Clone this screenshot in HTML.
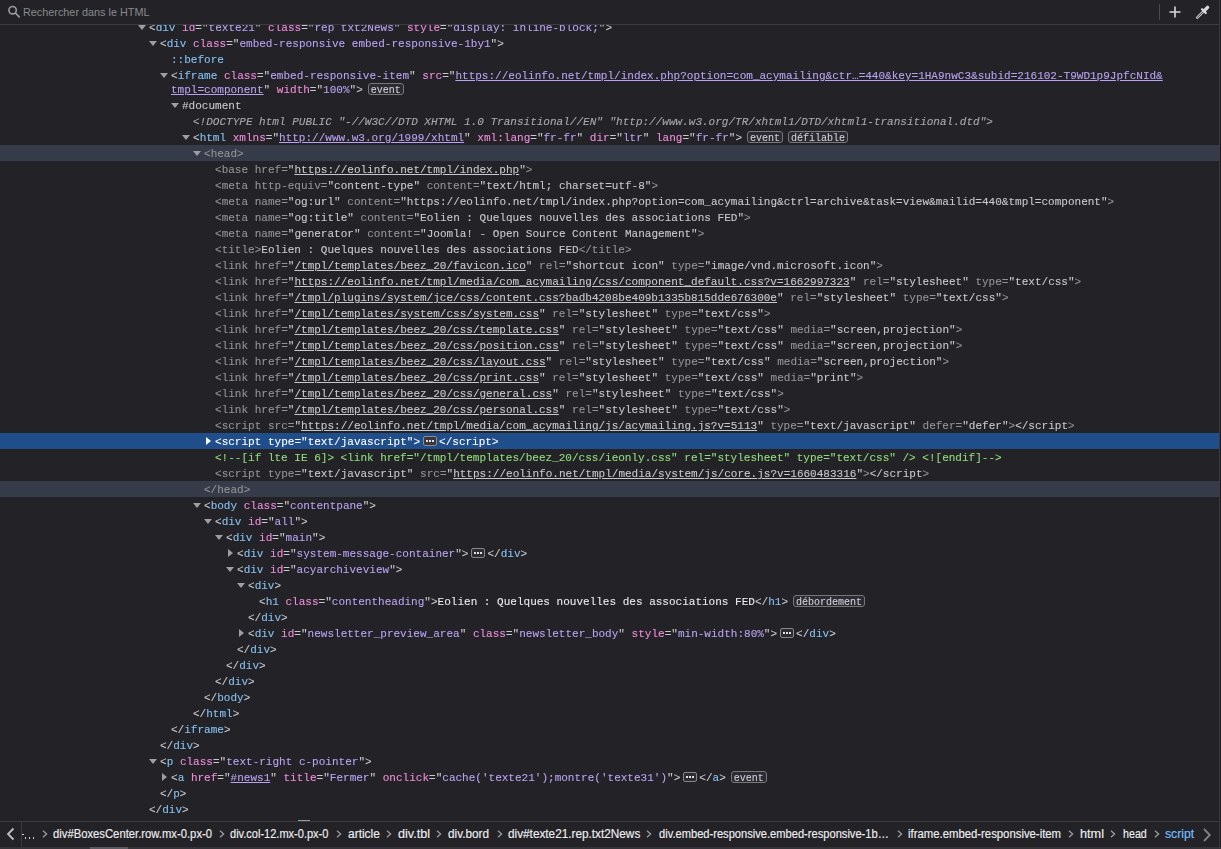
<!DOCTYPE html>
<html><head><meta charset="utf-8"><title>Inspector</title>
<style>
html,body{margin:0;padding:0;}
body{width:1221px;height:849px;overflow:hidden;background:#232327;position:relative;font-family:"Liberation Mono",monospace;}
#tree{position:absolute;left:0;top:0;width:1221px;height:849px;overflow:hidden;will-change:transform;}
.row{position:absolute;height:16px;line-height:18px;font-size:11.036px;white-space:pre;color:#c8c8cc;-webkit-text-stroke:0.1px currentColor;}
.bg{position:absolute;left:0;width:1219px;height:16px;}
.bsel{background:#204e8a;}
.bhov{background:#353b48;}
.p{color:#c8c8cc;}
.t{color:#86c0f2;}
.n{color:#f08cdc;}
.v{color:#b9a2f2;}
.u{text-decoration:underline;}
.tx{color:#e8e8ec;}
.ps{color:#86c0f2;}
.ps{}
.doc{color:#c8c8cc;}
.dt{color:#a8a8ae;font-style:italic;}
.cm{color:#8edc7c;}
.dim .p,.dim .t,.dim .n{color:#939397;}
.dim .v,.dim .tx{color:#c8c8cc;}
.dim .p.q{color:#c8c8cc;}
.sel .exp{background:#38383d;border-color:#8a8a90}
.sel .p,.sel .t,.sel .n,.sel .v,.sel .tx{color:#ffffff;}
.tw{position:absolute;width:0;height:0;}
.td{border-left:4px solid transparent;border-right:4px solid transparent;border-top:5px solid #9d9da3;}
.tr{border-top:4px solid transparent;border-bottom:4px solid transparent;border-left:5px solid #9d9da3;}
.trs{border-left-color:#ffffff;}
.bdg{display:inline-block;vertical-align:top;margin-top:2px;margin-left:5px;font-size:10px;line-height:13px;height:10px;padding:0 2px;border:1px solid #76767c;border-radius:3px;background:#2b2b33;color:#cdcdd2;}
.exp{display:inline-block;position:relative;vertical-align:top;margin:3px 2px 0 3px;width:12px;height:8px;border:1px solid #85858b;border-radius:2px;background:#2c2c31;}
.exp i{position:absolute;top:3px;width:2px;height:2px;background:#e0e0e6;}
.exp i:nth-child(1){left:2px}.exp i:nth-child(2){left:5px}.exp i:nth-child(3){left:8px}

</style></head><body>
<div id="tree">
<div class="tw td" style="left:138px;top:25px"></div><div class="row" style="top:19px;left:149px"><span class="p">&lt;</span><span class="t">div</span> <span class="n">id</span><span class="p">=</span><span class="p q">"</span><span class="v">texte21</span><span class="p q">"</span> <span class="n">class</span><span class="p">=</span><span class="p q">"</span><span class="v">rep txt2News</span><span class="p q">"</span> <span class="n">style</span><span class="p">=</span><span class="p q">"</span><span class="v">display: inline-block;</span><span class="p q">"</span><span class="p">&gt;</span></div><div class="tw td" style="left:149px;top:41px"></div><div class="row" style="top:35px;left:160px"><span class="p">&lt;</span><span class="t">div</span> <span class="n">class</span><span class="p">=</span><span class="p q">"</span><span class="v">embed-responsive embed-responsive-1by1</span><span class="p q">"</span><span class="p">&gt;</span></div><div class="row" style="top:51px;left:171px"><span class="ps">::before</span></div><div class="tw td" style="left:160px;top:73px"></div><div class="row" style="top:67px;left:171px"><span class="p">&lt;</span><span class="t">iframe</span> <span class="n">class</span><span class="p">=</span><span class="p q">"</span><span class="v">embed-responsive-item</span><span class="p q">"</span> <span class="n">src</span><span class="p">=</span><span class="p q">"</span><span class="v u">https://eolinfo.net/tmpl/index.php?option=com_acymailing&amp;ctr…=440&amp;key=1HA9nwC3&amp;subid=216102-T9WD1p9JpfcNId&amp;</span></div><div class="row" style="top:81px;left:171px"><span class="v u">tmpl=component</span><span class="p q">"</span> <span class="n">width</span><span class="p">=</span><span class="p q">"</span><span class="v">100%</span><span class="p q">"</span><span class="p">&gt;</span><span class="bdg">event</span></div><div class="tw td" style="left:171px;top:103px"></div><div class="row" style="top:97px;left:182px"><span class="doc">#document</span></div><div class="row" style="top:113px;left:193px"><span class="dt">&lt;!DOCTYPE html PUBLIC "-//W3C//DTD XHTML 1.0 Transitional//EN" "http://www.w3.org/TR/xhtml1/DTD/xhtml1-transitional.dtd"&gt;</span></div><div class="tw td" style="left:182px;top:135px"></div><div class="row" style="top:129px;left:193px"><span class="p">&lt;</span><span class="t">html</span> <span class="n">xmlns</span><span class="p">=</span><span class="p q">"</span><span class="v u">http://www.w3.org/1999/xhtml</span><span class="p q">"</span> <span class="n">xml:lang</span><span class="p">=</span><span class="p q">"</span><span class="v">fr-fr</span><span class="p q">"</span> <span class="n">dir</span><span class="p">=</span><span class="p q">"</span><span class="v">ltr</span><span class="p q">"</span> <span class="n">lang</span><span class="p">=</span><span class="p q">"</span><span class="v">fr-fr</span><span class="p q">"</span><span class="p">&gt;</span><span class="bdg">event</span><span class="bdg">défilable</span></div><div class="bg bhov" style="top:145px"></div><div class="tw td" style="left:193px;top:151px"></div><div class="row dim hov" style="top:145px;left:204px"><span class="p">&lt;</span><span class="t">head</span><span class="p">&gt;</span></div><div class="row dim" style="top:161px;left:215px"><span class="p">&lt;</span><span class="t">base</span> <span class="n">href</span><span class="p">=</span><span class="p q">"</span><span class="v u">https://eolinfo.net/tmpl/index.php</span><span class="p q">"</span><span class="p">&gt;</span></div><div class="row dim" style="top:177px;left:215px"><span class="p">&lt;</span><span class="t">meta</span> <span class="n">http-equiv</span><span class="p">=</span><span class="p q">"</span><span class="v">content-type</span><span class="p q">"</span> <span class="n">content</span><span class="p">=</span><span class="p q">"</span><span class="v">text/html; charset=utf-8</span><span class="p q">"</span><span class="p">&gt;</span></div><div class="row dim" style="top:193px;left:215px"><span class="p">&lt;</span><span class="t">meta</span> <span class="n">name</span><span class="p">=</span><span class="p q">"</span><span class="v">og:url</span><span class="p q">"</span> <span class="n">content</span><span class="p">=</span><span class="p q">"</span><span class="v">https://eolinfo.net/tmpl/index.php?option=com_acymailing&amp;ctrl=archive&amp;task=view&amp;mailid=440&amp;tmpl=component</span><span class="p q">"</span><span class="p">&gt;</span></div><div class="row dim" style="top:209px;left:215px"><span class="p">&lt;</span><span class="t">meta</span> <span class="n">name</span><span class="p">=</span><span class="p q">"</span><span class="v">og:title</span><span class="p q">"</span> <span class="n">content</span><span class="p">=</span><span class="p q">"</span><span class="v">Eolien : Quelques nouvelles des associations FED</span><span class="p q">"</span><span class="p">&gt;</span></div><div class="row dim" style="top:225px;left:215px"><span class="p">&lt;</span><span class="t">meta</span> <span class="n">name</span><span class="p">=</span><span class="p q">"</span><span class="v">generator</span><span class="p q">"</span> <span class="n">content</span><span class="p">=</span><span class="p q">"</span><span class="v">Joomla! - Open Source Content Management</span><span class="p q">"</span><span class="p">&gt;</span></div><div class="row dim" style="top:241px;left:215px"><span class="p">&lt;</span><span class="t">title</span><span class="p">&gt;</span><span class="tx">Eolien : Quelques nouvelles des associations FED</span><span class="p">&lt;/</span><span class="t">title</span><span class="p">&gt;</span></div><div class="row dim" style="top:257px;left:215px"><span class="p">&lt;</span><span class="t">link</span> <span class="n">href</span><span class="p">=</span><span class="p q">"</span><span class="v u">/tmpl/templates/beez_20/favicon.ico</span><span class="p q">"</span> <span class="n">rel</span><span class="p">=</span><span class="p q">"</span><span class="v">shortcut icon</span><span class="p q">"</span> <span class="n">type</span><span class="p">=</span><span class="p q">"</span><span class="v">image/vnd.microsoft.icon</span><span class="p q">"</span><span class="p">&gt;</span></div><div class="row dim" style="top:273px;left:215px"><span class="p">&lt;</span><span class="t">link</span> <span class="n">href</span><span class="p">=</span><span class="p q">"</span><span class="v u">https://eolinfo.net/tmpl/media/com_acymailing/css/component_default.css?v=1662997323</span><span class="p q">"</span> <span class="n">rel</span><span class="p">=</span><span class="p q">"</span><span class="v">stylesheet</span><span class="p q">"</span> <span class="n">type</span><span class="p">=</span><span class="p q">"</span><span class="v">text/css</span><span class="p q">"</span><span class="p">&gt;</span></div><div class="row dim" style="top:289px;left:215px"><span class="p">&lt;</span><span class="t">link</span> <span class="n">href</span><span class="p">=</span><span class="p q">"</span><span class="v u">/tmpl/plugins/system/jce/css/content.css?badb4208be409b1335b815dde676300e</span><span class="p q">"</span> <span class="n">rel</span><span class="p">=</span><span class="p q">"</span><span class="v">stylesheet</span><span class="p q">"</span> <span class="n">type</span><span class="p">=</span><span class="p q">"</span><span class="v">text/css</span><span class="p q">"</span><span class="p">&gt;</span></div><div class="row dim" style="top:305px;left:215px"><span class="p">&lt;</span><span class="t">link</span> <span class="n">href</span><span class="p">=</span><span class="p q">"</span><span class="v u">/tmpl/templates/system/css/system.css</span><span class="p q">"</span> <span class="n">rel</span><span class="p">=</span><span class="p q">"</span><span class="v">stylesheet</span><span class="p q">"</span> <span class="n">type</span><span class="p">=</span><span class="p q">"</span><span class="v">text/css</span><span class="p q">"</span><span class="p">&gt;</span></div><div class="row dim" style="top:321px;left:215px"><span class="p">&lt;</span><span class="t">link</span> <span class="n">href</span><span class="p">=</span><span class="p q">"</span><span class="v u">/tmpl/templates/beez_20/css/template.css</span><span class="p q">"</span> <span class="n">rel</span><span class="p">=</span><span class="p q">"</span><span class="v">stylesheet</span><span class="p q">"</span> <span class="n">type</span><span class="p">=</span><span class="p q">"</span><span class="v">text/css</span><span class="p q">"</span> <span class="n">media</span><span class="p">=</span><span class="p q">"</span><span class="v">screen,projection</span><span class="p q">"</span><span class="p">&gt;</span></div><div class="row dim" style="top:337px;left:215px"><span class="p">&lt;</span><span class="t">link</span> <span class="n">href</span><span class="p">=</span><span class="p q">"</span><span class="v u">/tmpl/templates/beez_20/css/position.css</span><span class="p q">"</span> <span class="n">rel</span><span class="p">=</span><span class="p q">"</span><span class="v">stylesheet</span><span class="p q">"</span> <span class="n">type</span><span class="p">=</span><span class="p q">"</span><span class="v">text/css</span><span class="p q">"</span> <span class="n">media</span><span class="p">=</span><span class="p q">"</span><span class="v">screen,projection</span><span class="p q">"</span><span class="p">&gt;</span></div><div class="row dim" style="top:353px;left:215px"><span class="p">&lt;</span><span class="t">link</span> <span class="n">href</span><span class="p">=</span><span class="p q">"</span><span class="v u">/tmpl/templates/beez_20/css/layout.css</span><span class="p q">"</span> <span class="n">rel</span><span class="p">=</span><span class="p q">"</span><span class="v">stylesheet</span><span class="p q">"</span> <span class="n">type</span><span class="p">=</span><span class="p q">"</span><span class="v">text/css</span><span class="p q">"</span> <span class="n">media</span><span class="p">=</span><span class="p q">"</span><span class="v">screen,projection</span><span class="p q">"</span><span class="p">&gt;</span></div><div class="row dim" style="top:369px;left:215px"><span class="p">&lt;</span><span class="t">link</span> <span class="n">href</span><span class="p">=</span><span class="p q">"</span><span class="v u">/tmpl/templates/beez_20/css/print.css</span><span class="p q">"</span> <span class="n">rel</span><span class="p">=</span><span class="p q">"</span><span class="v">stylesheet</span><span class="p q">"</span> <span class="n">type</span><span class="p">=</span><span class="p q">"</span><span class="v">text/css</span><span class="p q">"</span> <span class="n">media</span><span class="p">=</span><span class="p q">"</span><span class="v">print</span><span class="p q">"</span><span class="p">&gt;</span></div><div class="row dim" style="top:385px;left:215px"><span class="p">&lt;</span><span class="t">link</span> <span class="n">href</span><span class="p">=</span><span class="p q">"</span><span class="v u">/tmpl/templates/beez_20/css/general.css</span><span class="p q">"</span> <span class="n">rel</span><span class="p">=</span><span class="p q">"</span><span class="v">stylesheet</span><span class="p q">"</span> <span class="n">type</span><span class="p">=</span><span class="p q">"</span><span class="v">text/css</span><span class="p q">"</span><span class="p">&gt;</span></div><div class="row dim" style="top:401px;left:215px"><span class="p">&lt;</span><span class="t">link</span> <span class="n">href</span><span class="p">=</span><span class="p q">"</span><span class="v u">/tmpl/templates/beez_20/css/personal.css</span><span class="p q">"</span> <span class="n">rel</span><span class="p">=</span><span class="p q">"</span><span class="v">stylesheet</span><span class="p q">"</span> <span class="n">type</span><span class="p">=</span><span class="p q">"</span><span class="v">text/css</span><span class="p q">"</span><span class="p">&gt;</span></div><div class="row dim" style="top:417px;left:215px"><span class="p">&lt;</span><span class="t">script</span> <span class="n">src</span><span class="p">=</span><span class="p q">"</span><span class="v u">https://eolinfo.net/tmpl/media/com_acymailing/js/acymailing.js?v=5113</span><span class="p q">"</span> <span class="n">type</span><span class="p">=</span><span class="p q">"</span><span class="v">text/javascript</span><span class="p q">"</span> <span class="n">defer</span><span class="p">=</span><span class="p q">"</span><span class="v">defer</span><span class="p q">"</span><span class="p">&gt;</span>&lt;/script<span class="p">&gt;</span></div><div class="bg bsel" style="top:433px"></div><div class="tw tr trs" style="left:206px;top:437px"></div><div class="row sel" style="top:433px;left:215px"><span class="p">&lt;</span><span class="t">script</span> <span class="n">type</span><span class="p">=</span><span class="p q">"</span><span class="v">text/javascript</span><span class="p q">"</span><span class="p">&gt;</span><span class="exp"><i></i><i></i><i></i></span><span class="p">&lt;/</span><span class="t">script</span><span class="p">&gt;</span></div><div class="row" style="top:449px;left:215px"><span class="cm">&lt;!--[if lte IE 6]&gt; &lt;link href="/tmpl/templates/beez_20/css/ieonly.css" rel="stylesheet" type="text/css" /&gt; &lt;![endif]--&gt;</span></div><div class="row dim" style="top:465px;left:215px"><span class="p">&lt;</span><span class="t">script</span> <span class="n">type</span><span class="p">=</span><span class="p q">"</span><span class="v">text/javascript</span><span class="p q">"</span> <span class="n">src</span><span class="p">=</span><span class="p q">"</span><span class="v u">https://eolinfo.net/tmpl/media/system/js/core.js?v=1660483316</span><span class="p q">"</span><span class="p">&gt;</span>&lt;/script<span class="p">&gt;</span></div><div class="bg bhov" style="top:481px"></div><div class="row dim hov" style="top:481px;left:204px"><span class="p">&lt;/</span><span class="t">head</span><span class="p">&gt;</span></div><div class="tw td" style="left:193px;top:503px"></div><div class="row" style="top:497px;left:204px"><span class="p">&lt;</span><span class="t">body</span> <span class="n">class</span><span class="p">=</span><span class="p q">"</span><span class="v">contentpane</span><span class="p q">"</span><span class="p">&gt;</span></div><div class="tw td" style="left:204px;top:519px"></div><div class="row" style="top:513px;left:215px"><span class="p">&lt;</span><span class="t">div</span> <span class="n">id</span><span class="p">=</span><span class="p q">"</span><span class="v">all</span><span class="p q">"</span><span class="p">&gt;</span></div><div class="tw td" style="left:215px;top:535px"></div><div class="row" style="top:529px;left:226px"><span class="p">&lt;</span><span class="t">div</span> <span class="n">id</span><span class="p">=</span><span class="p q">"</span><span class="v">main</span><span class="p q">"</span><span class="p">&gt;</span></div><div class="tw tr" style="left:228px;top:549px"></div><div class="row" style="top:545px;left:237px"><span class="p">&lt;</span><span class="t">div</span> <span class="n">id</span><span class="p">=</span><span class="p q">"</span><span class="v">system-message-container</span><span class="p q">"</span><span class="p">&gt;</span><span class="exp"><i></i><i></i><i></i></span><span class="p">&lt;/</span><span class="t">div</span><span class="p">&gt;</span></div><div class="tw td" style="left:226px;top:567px"></div><div class="row" style="top:561px;left:237px"><span class="p">&lt;</span><span class="t">div</span> <span class="n">id</span><span class="p">=</span><span class="p q">"</span><span class="v">acyarchiveview</span><span class="p q">"</span><span class="p">&gt;</span></div><div class="tw td" style="left:237px;top:583px"></div><div class="row" style="top:577px;left:248px"><span class="p">&lt;</span><span class="t">div</span><span class="p">&gt;</span></div><div class="row" style="top:593px;left:259px"><span class="p">&lt;</span><span class="t">h1</span> <span class="n">class</span><span class="p">=</span><span class="p q">"</span><span class="v">contentheading</span><span class="p q">"</span><span class="p">&gt;</span><span class="tx">Eolien : Quelques nouvelles des associations FED</span><span class="p">&lt;/</span><span class="t">h1</span><span class="p">&gt;</span><span class="bdg">débordement</span></div><div class="row" style="top:609px;left:248px"><span class="p">&lt;/</span><span class="t">div</span><span class="p">&gt;</span></div><div class="tw tr" style="left:239px;top:629px"></div><div class="row" style="top:625px;left:248px"><span class="p">&lt;</span><span class="t">div</span> <span class="n">id</span><span class="p">=</span><span class="p q">"</span><span class="v">newsletter_preview_area</span><span class="p q">"</span> <span class="n">class</span><span class="p">=</span><span class="p q">"</span><span class="v">newsletter_body</span><span class="p q">"</span> <span class="n">style</span><span class="p">=</span><span class="p q">"</span><span class="v">min-width:80%</span><span class="p q">"</span><span class="p">&gt;</span><span class="exp"><i></i><i></i><i></i></span><span class="p">&lt;/</span><span class="t">div</span><span class="p">&gt;</span></div><div class="row" style="top:641px;left:237px"><span class="p">&lt;/</span><span class="t">div</span><span class="p">&gt;</span></div><div class="row" style="top:657px;left:226px"><span class="p">&lt;/</span><span class="t">div</span><span class="p">&gt;</span></div><div class="row" style="top:673px;left:215px"><span class="p">&lt;/</span><span class="t">div</span><span class="p">&gt;</span></div><div class="row" style="top:689px;left:204px"><span class="p">&lt;/</span><span class="t">body</span><span class="p">&gt;</span></div><div class="row" style="top:705px;left:193px"><span class="p">&lt;/</span><span class="t">html</span><span class="p">&gt;</span></div><div class="row" style="top:721px;left:171px"><span class="p">&lt;/</span><span class="t">iframe</span><span class="p">&gt;</span></div><div class="row" style="top:737px;left:160px"><span class="p">&lt;/</span><span class="t">div</span><span class="p">&gt;</span></div><div class="tw td" style="left:149px;top:759px"></div><div class="row" style="top:753px;left:160px"><span class="p">&lt;</span><span class="t">p</span> <span class="n">class</span><span class="p">=</span><span class="p q">"</span><span class="v">text-right c-pointer</span><span class="p q">"</span><span class="p">&gt;</span></div><div class="tw tr" style="left:162px;top:773px"></div><div class="row" style="top:769px;left:171px"><span class="p">&lt;</span><span class="t">a</span> <span class="n">href</span><span class="p">=</span><span class="p q">"</span><span class="v u">#news1</span><span class="p q">"</span> <span class="n">title</span><span class="p">=</span><span class="p q">"</span><span class="v">Fermer</span><span class="p q">"</span> <span class="n">onclick</span><span class="p">=</span><span class="p q">"</span><span class="v">cache('texte21');montre('texte31')</span><span class="p q">"</span><span class="p">&gt;</span><span class="exp"><i></i><i></i><i></i></span><span class="p">&lt;/</span><span class="t">a</span><span class="p">&gt;</span><span class="bdg">event</span></div><div class="row" style="top:785px;left:160px"><span class="p">&lt;/</span><span class="t">p</span><span class="p">&gt;</span></div><div class="row" style="top:801px;left:149px"><span class="p">&lt;/</span><span class="t">div</span><span class="p">&gt;</span></div>
</div>
<div id="toolbar" style="position:absolute;left:0;top:0;width:1219px;height:24px;background:#232327;border-bottom:1px solid #3a3a3f;">
<svg style="position:absolute;left:8px;top:5px" width="13" height="13" viewBox="0 0 13 13"><circle cx="4.6" cy="5.2" r="3.7" fill="none" stroke="#9a9aa0" stroke-width="1.6"/><path d="M7.4 8 L11.2 11.8" stroke="#9a9aa0" stroke-width="1.7" stroke-linecap="round"/></svg>
<div style="position:absolute;left:23px;top:4px;font-family:'Liberation Sans',sans-serif;font-size:11px;line-height:16px;color:#88888e;transform-origin:0 0;transform:scaleX(0.985)">Rechercher dans le HTML</div>
<div style="position:absolute;left:1159px;top:4px;width:1px;height:16px;background:#4a4a50"></div>
<svg style="position:absolute;left:1168px;top:5px" width="14" height="14" viewBox="0 0 14 14"><path d="M7 1.5 V12.5 M1.5 7 H12.5" stroke="#d7d7db" stroke-width="1.6"/></svg>
<svg style="position:absolute;left:1194px;top:3px" width="18" height="18" viewBox="0 0 18 18"><path d="M3.2 14.6 L9.2 8.6" stroke="#d7d7db" stroke-width="2.6" fill="none" stroke-linecap="round"/><path d="M3.2 14.6 L9.2 8.6" stroke="#232327" stroke-width="0.9" fill="none" stroke-linecap="round"/><path d="M8 6.2 L11.8 10" stroke="#d7d7db" stroke-width="2.2" stroke-linecap="round"/><path d="M10.2 7.8 L13.6 4.4" stroke="#d7d7db" stroke-width="3.4" stroke-linecap="round"/></svg>
</div>
<div style="position:absolute;left:1219px;top:0;width:1px;height:847px;background:#3a3a3f"></div>
<div style="position:absolute;left:1220px;top:0;width:1px;height:849px;background:#1c1c20"></div>

<div id="crumbs" style="position:absolute;left:0;top:821px;width:1219px;height:26px;background:#232327;border-top:1px solid #3a3a3f;font-family:'Liberation Sans',sans-serif;font-size:12px;color:#ededf0;-webkit-text-stroke:0.15px currentColor;">
<svg style="position:absolute;left:5px;top:5px" width="12" height="14" viewBox="0 0 12 14"><path d="M8.5 1.5 L3 7 L8.5 12.5" stroke="#c0c0c6" stroke-width="1.8" fill="none"/></svg>
<div style="position:absolute;left:21px;top:0;width:1px;height:25px;background:#3a3a3f"></div>
<div style="position:absolute;left:22px;top:12px;width:2px;height:1px;background:#d0d0d4"></div>
<div style="position:absolute;left:25px;top:15px;width:1px;height:2px;background:#c8c8cc"></div>
<div style="position:absolute;left:29px;top:15px;width:1px;height:2px;background:#c8c8cc"></div>
<div style="position:absolute;left:33px;top:15px;width:1px;height:2px;background:#c8c8cc"></div>
<span style="position:absolute;left:53.0px;top:4px;line-height:16px;white-space:pre;transform-origin:0 0;transform:scaleX(0.9388);color:#ededf0">div#BoxesCenter.row.mx-0.px-0</span><span style="position:absolute;left:230.2px;top:4px;line-height:16px;white-space:pre;transform-origin:0 0;transform:scaleX(0.9185);color:#ededf0">div.col-12.mx-0.px-0</span><span style="position:absolute;left:347.8px;top:4px;line-height:16px;white-space:pre;transform-origin:0 0;transform:scaleX(0.9963);color:#ededf0">article</span><span style="position:absolute;left:398.3px;top:4px;line-height:16px;white-space:pre;transform-origin:0 0;transform:scaleX(1.0520);color:#ededf0">div.tbl</span><span style="position:absolute;left:448.2px;top:4px;line-height:16px;white-space:pre;transform-origin:0 0;transform:scaleX(0.9825);color:#ededf0">div.bord</span><span style="position:absolute;left:508.2px;top:4px;line-height:16px;white-space:pre;transform-origin:0 0;transform:scaleX(0.9817);color:#ededf0">div#texte21.rep.txt2News</span><span style="position:absolute;left:659.2px;top:4px;line-height:16px;white-space:pre;transform-origin:0 0;transform:scaleX(0.9271);color:#ededf0">div.embed-responsive.embed-responsive-1b…</span><span style="position:absolute;left:908.1px;top:4px;line-height:16px;white-space:pre;transform-origin:0 0;transform:scaleX(0.9444);color:#ededf0">iframe.embed-responsive-item</span><span style="position:absolute;left:1080.2px;top:4px;line-height:16px;white-space:pre;transform-origin:0 0;transform:scaleX(1.0567);color:#ededf0">html</span><span style="position:absolute;left:1123.2px;top:4px;line-height:16px;white-space:pre;transform-origin:0 0;transform:scaleX(0.8909);color:#ededf0">head</span><span style="position:absolute;left:1165.4px;top:4px;line-height:16px;white-space:pre;transform-origin:0 0;transform:scaleX(1.0191);color:#75bfff">script</span><svg style="position:absolute;left:41.5px;top:8px" width="6" height="8" viewBox="0 0 6 8"><path d="M1 0.8 L4.6 4 L1 7.2" stroke="#9b9ba3" stroke-width="1.3" fill="none"/></svg><svg style="position:absolute;left:219.1px;top:8px" width="6" height="8" viewBox="0 0 6 8"><path d="M1 0.8 L4.6 4 L1 7.2" stroke="#9b9ba3" stroke-width="1.3" fill="none"/></svg><svg style="position:absolute;left:335.5px;top:8px" width="6" height="8" viewBox="0 0 6 8"><path d="M1 0.8 L4.6 4 L1 7.2" stroke="#9b9ba3" stroke-width="1.3" fill="none"/></svg><svg style="position:absolute;left:386.4px;top:8px" width="6" height="8" viewBox="0 0 6 8"><path d="M1 0.8 L4.6 4 L1 7.2" stroke="#9b9ba3" stroke-width="1.3" fill="none"/></svg><svg style="position:absolute;left:436.3px;top:8px" width="6" height="8" viewBox="0 0 6 8"><path d="M1 0.8 L4.6 4 L1 7.2" stroke="#9b9ba3" stroke-width="1.3" fill="none"/></svg><svg style="position:absolute;left:497.0px;top:8px" width="6" height="8" viewBox="0 0 6 8"><path d="M1 0.8 L4.6 4 L1 7.2" stroke="#9b9ba3" stroke-width="1.3" fill="none"/></svg><svg style="position:absolute;left:646.3px;top:8px" width="6" height="8" viewBox="0 0 6 8"><path d="M1 0.8 L4.6 4 L1 7.2" stroke="#9b9ba3" stroke-width="1.3" fill="none"/></svg><svg style="position:absolute;left:896.8px;top:8px" width="6" height="8" viewBox="0 0 6 8"><path d="M1 0.8 L4.6 4 L1 7.2" stroke="#9b9ba3" stroke-width="1.3" fill="none"/></svg><svg style="position:absolute;left:1068.4px;top:8px" width="6" height="8" viewBox="0 0 6 8"><path d="M1 0.8 L4.6 4 L1 7.2" stroke="#9b9ba3" stroke-width="1.3" fill="none"/></svg><svg style="position:absolute;left:1109.9px;top:8px" width="6" height="8" viewBox="0 0 6 8"><path d="M1 0.8 L4.6 4 L1 7.2" stroke="#9b9ba3" stroke-width="1.3" fill="none"/></svg><svg style="position:absolute;left:1154.4px;top:8px" width="6" height="8" viewBox="0 0 6 8"><path d="M1 0.8 L4.6 4 L1 7.2" stroke="#9b9ba3" stroke-width="1.3" fill="none"/></svg>
<svg style="position:absolute;left:1201px;top:6px" width="12" height="14" viewBox="0 0 12 14"><path d="M3 1 L8.8 7 L3 13" stroke="#808086" stroke-width="1.8" fill="none"/></svg>
</div>
<div style="position:absolute;left:298px;top:820px;width:12px;height:1px;background:#9a9aa0"></div>
<div style="position:absolute;left:0;top:847px;width:1221px;height:2px;background:#333338"></div>
<div style="position:absolute;left:90px;top:847px;width:38px;height:2px;background:#5a5a60"></div>

</body></html>
